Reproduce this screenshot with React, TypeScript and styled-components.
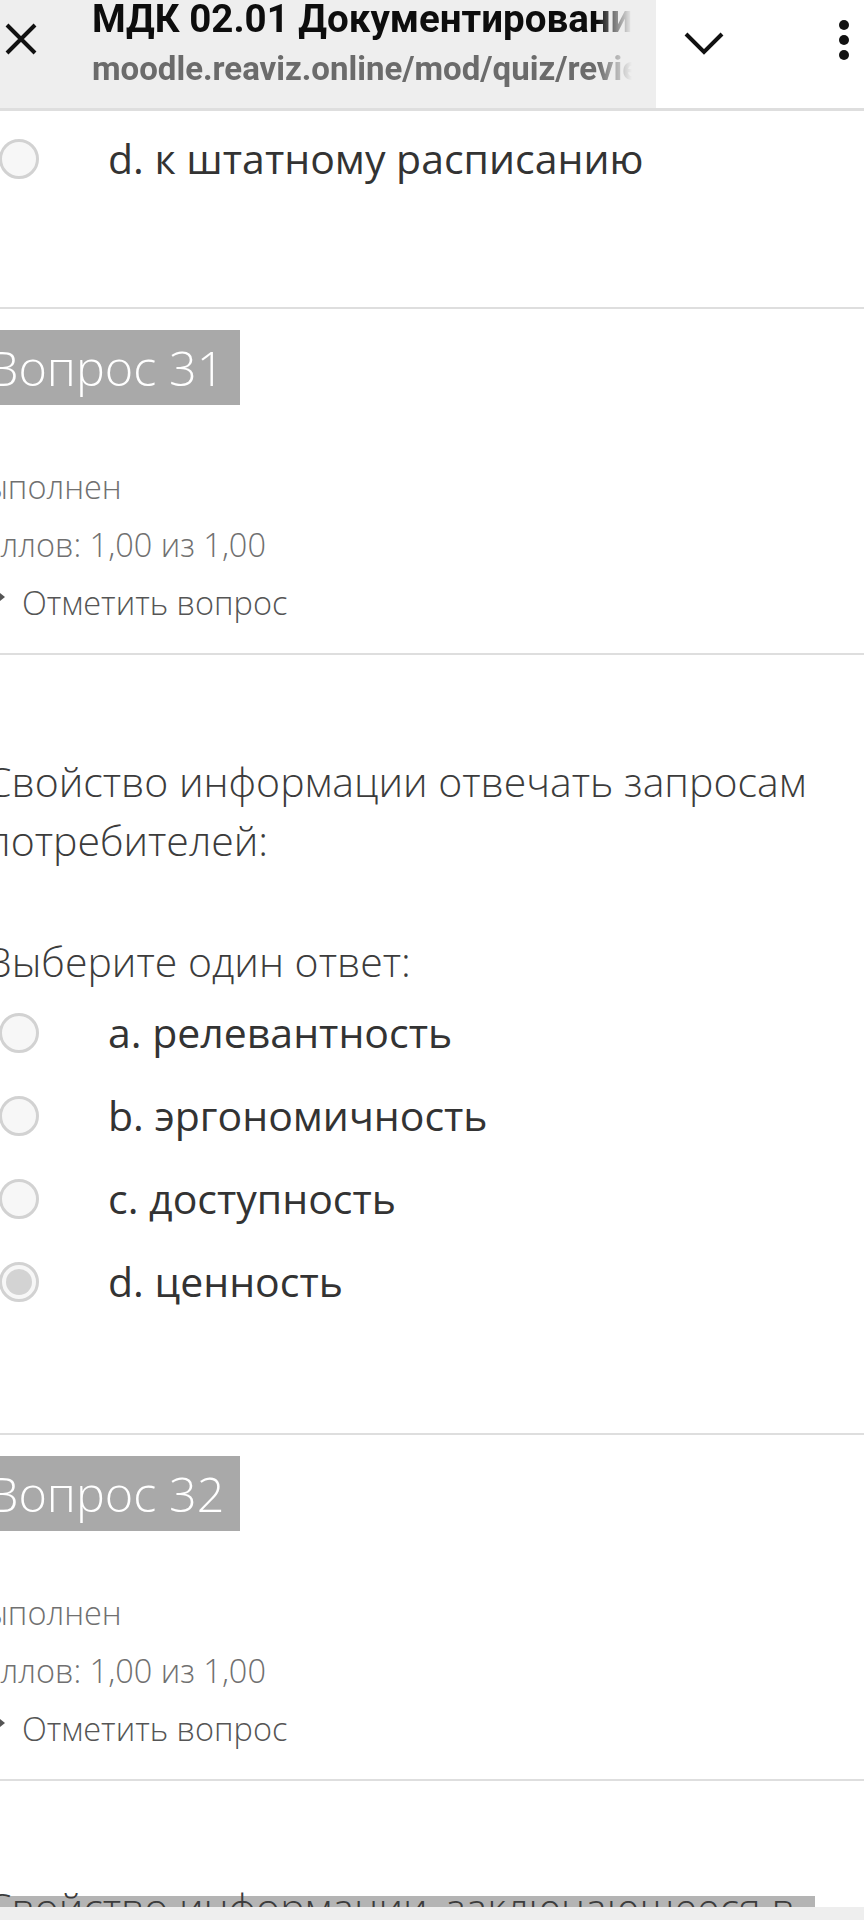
import React from 'react';
import styled, { createGlobalStyle } from 'styled-components';

const GlobalStyle = createGlobalStyle`
  html, body {
    margin: 0;
    padding: 0;
    background: #fff;
  }
  body {
    overflow-x: hidden;
    font-family: 'Open Sans', 'Noto Sans', sans-serif;
  }
`;

type Answer = { letter: string; text: string; checked?: boolean };

const answers31: Answer[] = [
  { letter: 'a', text: 'релевантность' },
  { letter: 'b', text: 'эргономичность' },
  { letter: 'c', text: 'доступность' },
  { letter: 'd', text: 'ценность', checked: true },
];

const CloseIcon = () => (
  <svg width="34" height="34" viewBox="0 0 34 34">
    <path d="M3 3 L31 31 M31 3 L3 31" stroke="#111" strokeWidth="4" fill="none" />
  </svg>
);

const ChevronIcon = () => (
  <svg width="40" height="24" viewBox="0 0 40 24">
    <polyline points="2,3 20,21 38,3" stroke="#111" strokeWidth="4" fill="none" />
  </svg>
);

const DotsIcon = () => (
  <svg width="12" height="42" viewBox="0 0 12 42">
    <circle cx="6" cy="6" r="5" fill="#111" />
    <circle cx="6" cy="21" r="5" fill="#111" />
    <circle cx="6" cy="36" r="5" fill="#111" />
  </svg>
);

const FlagIcon = () => (
  <svg width="41" height="40" viewBox="0 0 41 40">
    <rect x="4" y="4" width="3" height="34" fill="#555" />
    <polygon points="6,6 30,6 41,15 30,24 6,24" fill="#555" />
  </svg>
);

const AnswerItem = ({ letter, text, checked }: Answer) => (
  <AnswerRow>
    <Radio $checked={!!checked} />
    <AnswerLabel>
      {letter}. {text}
    </AnswerLabel>
  </AnswerRow>
);

const QuestionInfo = ({ num }: { num: number }) => (
  <Info>
    <QNo>Вопрос {num}</QNo>
    <Meta>
      <MetaLine>Выполнен</MetaLine>
      <MetaLine>Баллов: 1,00 из 1,00</MetaLine>
      <MetaLine>
        <FlagIcon />
        <FlagText>Отметить вопрос</FlagText>
      </MetaLine>
    </Meta>
  </Info>
);

const App = () => {
  return (
    <>
      <GlobalStyle />
      <TopBar>
        <TabArea>
          <CloseSlot>
            <CloseIcon />
          </CloseSlot>
          <TitleBox>
            <Title>МДК 02.01 Документирование управленческой деятельности</Title>
            <Url>moodle.reaviz.online/mod/quiz/review.php?attempt=1</Url>
          </TitleBox>
        </TabArea>
        <Actions>
          <ChevronSlot>
            <ChevronIcon />
          </ChevronSlot>
          <DotsSlot>
            <DotsIcon />
          </DotsSlot>
        </Actions>
      </TopBar>

      <Page>
        <Tail>
          <AnswerItem letter="d" text="к штатному расписанию" />
        </Tail>

        <Question>
          <QuestionInfo num={31} />
          <Content>
            <QText>Свойство информации отвечать запросам потребителей:</QText>
            <Prompt>Выберите один ответ:</Prompt>
            {answers31.map((a) => (
              <AnswerItem key={a.letter} {...a} />
            ))}
          </Content>
        </Question>

        <Question>
          <QuestionInfo num={32} />
          <Content>
            <QText>
              <Marked>Свойство информации, заключающееся в</Marked>
            </QText>
          </Content>
        </Question>
      </Page>

      <BottomBar />
    </>
  );
};

const TopBar = styled.header`
  display: flex;
  height: 108px;
  border-bottom: 3px solid #dedede;
  background: #fff;
  font-family: Roboto, 'Liberation Sans', sans-serif;
`;

const TabArea = styled.div`
  display: flex;
  align-items: flex-start;
  width: 656px;
  background: #eeeeee;
  overflow: hidden;
`;

const CloseSlot = styled.div`
  width: 88px;
  padding: 22px 0 0 4px;
`;

const TitleBox = styled.div`
  flex: 1;
  min-width: 0;
  margin-right: 24px;
  white-space: nowrap;
  overflow: hidden;
  -webkit-mask-image: linear-gradient(to right, #000 calc(100% - 34px), transparent);
  mask-image: linear-gradient(to right, #000 calc(100% - 34px), transparent);
`;

const Title = styled.div`
  margin-top: -3px;
  font-size: 38.5px;
  line-height: 44px;
  font-weight: 700;
  color: #0d0d0d;
`;

const Url = styled.div`
  margin-top: 8px;
  font-size: 33px;
  line-height: 40px;
  font-weight: 700;
  color: #6b6b6b;
`;

const Actions = styled.div`
  display: flex;
  align-items: flex-start;
  flex: 1;
`;

const ChevronSlot = styled.div`
  padding: 31px 0 0 28px;
`;

const DotsSlot = styled.div`
  padding: 19px 0 0 114px;
`;

const Page = styled.main`
  margin-left: -36px;
`;

const Tail = styled.div`
  padding: 6px 0 107px 22px;
`;

const Question = styled.section`
  border-top: 2px solid #dedede;
`;

const Info = styled.div`
  padding: 21px 0 22px;
  border-bottom: 2px solid #dedede;
`;

const QNo = styled.div`
  width: 276px;
  height: 75px;
  box-sizing: border-box;
  padding-left: 24px;
  background: #a9a9a9;
  color: #fff;
  font-size: 48.5px;
  line-height: 75px;
  font-weight: 300;
  white-space: nowrap;
`;

const Meta = styled.div`
  margin-top: 52px;
`;

const MetaLine = styled.div`
  display: flex;
  align-items: center;
  height: 58px;
  font-size: 32.5px;
  font-weight: 300;
  color: #707070;
  white-space: nowrap;
`;

const FlagText = styled.span`
  margin-left: 17px;
  color: #555;
`;

const Content = styled.div`
  padding: 97px 0 110px 22px;
`;

const QText = styled.p`
  margin: 0;
  font-size: 41px;
  line-height: 59px;
  font-weight: 300;
  color: #3c3c3c;
`;

const Marked = styled.span`
  padding-right: 20px;
  background: linear-gradient(to bottom, transparent 17px, #b4b4b4 17px);
`;

const Prompt = styled.div`
  margin-top: 62px;
  font-size: 41px;
  line-height: 59px;
  font-weight: 300;
  color: #3c3c3c;
`;

const AnswerRow = styled.label`
  display: flex;
  align-items: center;
  height: 83px;
  margin-left: 13px;
`;

const Radio = styled.span<{ $checked: boolean }>`
  position: relative;
  flex: none;
  width: 40px;
  height: 40px;
  box-sizing: border-box;
  border: 3px solid #d2d2d2;
  border-radius: 50%;
  background: #f7f7f7;

  &::after {
    content: '';
    display: ${({ $checked }) => ($checked ? 'block' : 'none')};
    position: absolute;
    left: 4px;
    top: 4px;
    width: 26px;
    height: 26px;
    border-radius: 50%;
    background: #d3d3d3;
  }
`;

const AnswerLabel = styled.span`
  margin-left: 69px;
  font-size: 41px;
  line-height: 59px;
  color: #333;
  white-space: nowrap;
`;

const BottomBar = styled.div`
  position: fixed;
  left: 0;
  right: 0;
  bottom: 0;
  height: 13px;
  background: #eeeeee;
`;

export default App;
